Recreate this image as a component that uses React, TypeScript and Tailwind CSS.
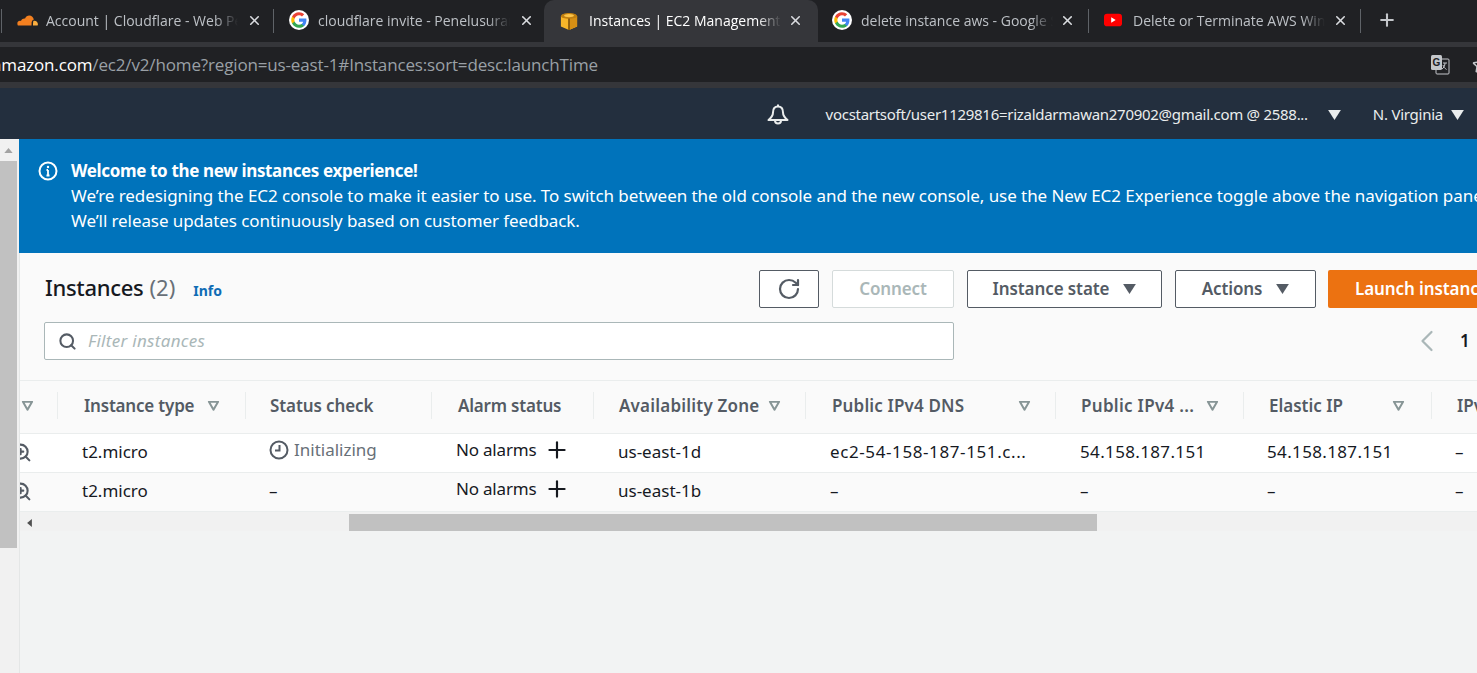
import { Plus, RotateCw, Search, Star, X, ChevronLeft, ZoomIn } from "lucide-react";

const ember = "font-['Noto_Sans','Open_Sans',sans-serif]";

function GoogleIcon() {
  return (
    <svg viewBox="0 0 24 24" className="h-[20px] w-[20px] shrink-0 rounded-full bg-white p-[1.5px]">
      <path fill="#4285F4" d="M22.5 12.2c0-.8-.1-1.5-.2-2.2H12v4.3h5.9c-.3 1.4-1 2.5-2.2 3.3v2.8h3.6c2.1-1.9 3.2-4.8 3.2-8.2z" />
      <path fill="#34A853" d="M12 23c3 0 5.500-1 7.300-2.700l-3.600-2.800c-1 .7-2.200 1.100-3.700 1.100-2.800 0-5.200-1.900-6.100-4.500H2.200V17c1.800 3.600 5.500 6 9.800 6z" />
      <path fill="#FBBC05" d="M5.900 14.100c-.2-.7-.4-1.400-.4-2.100s.1-1.400.4-2.100V7H2.200C1.400 8.500 1 10.200 1 12s.4 3.500 1.200 5l3.700-2.900z" />
      <path fill="#EA4335" d="M12 5.400c1.600 0 3.100.6 4.200 1.600l3.200-3.200C17.500 2.100 15 1 12 1 7.700 1 4 3.500 2.200 7l3.700 2.900c.9-2.600 3.300-4.500 6.100-4.500z" />
    </svg>
  );
}

function CloudIcon() {
  return (
    <svg viewBox="0 0 24 12" className="h-[11px] w-[21px] shrink-0">
      <path fill="#f38020" d="M16.600 11.600H1c-.4-.7-.6-1.500-.6-2.200 0-1.700 1.300-3 3-3 .4 0 .8.100 1.100.200C5.400 4.600 7 3.800 8.400 3.800c.4-.1.600-.1.800-.1C10 1.700 11.900.4 14 .4c2.700 0 4.900 2 5.200 4.700-1.400.2-2.200 1.400-2.500 3l-.1 3.500z" />
      <path fill="#faae40" d="M18.300 11.600h5.300c.2-.5.300-.9.300-1.400 0-2.200-1.800-4-4-4-.5 0-1 .1-1.200.3-.4 1.200-.4 3.500-.4 5.100z" />
    </svg>
  );
}

function AwsBoxIcon() {
  return (
    <svg viewBox="0 0 20 20" className="mt-[2px] h-[20px] w-[18px] shrink-0">
      <path fill="#f9b629" d="M1 4.500L10 7l9-2.500v11.500l-9 4-9-4z" />
      <path fill="#d68f14" d="M10 7l9-2.500v11.500l-9 4z" />
      <path fill="#c07f10" d="M1 4.500C1 2.500 5 1 10 1s9 1.500 9 3.500S15 7.500 10 7.500 1 6.500 1 4.500z" />
      <path fill="#fbc44a" d="M4.500 4c0-1 2.500-1.800 5.500-1.800s5.500.8 5.500 1.800-2.500 1.800-5.500 1.800S4.500 5 4.500 4z" />
      <path fill="#8a5a0c" d="M9 7.200h2V20H9z" />
    </svg>
  );
}

function YoutubeIcon() {
  return (
    <svg viewBox="0 0 20 14" className="h-[14px] w-[18px] shrink-0">
      <rect width="20" height="14" rx="3.500" fill="#ff0000" />
      <path d="M8 4l5 3-5 3z" fill="#fff" />
    </svg>
  );
}

const tabs = [
  { title: "Account | Cloudflare - Web Performance", icon: <CloudIcon />, box: "w-[271px] pl-[15px] pr-[11px]", sep: true, text: "text-[#bdc1c6]" },
  { title: "cloudflare invite - Penelusuran Google", icon: <GoogleIcon />, box: "w-[270px] pl-[15px] pr-[10px]", sep: false, text: "text-[#bdc1c6]" },
  { title: "Instances | EC2 Management Console", icon: <AwsBoxIcon />, box: "w-[274px] rounded-t-[10px] bg-[#35363a] pl-[16px] pr-[15px]", sep: false, text: "text-white" },
  { title: "delete instance aws - Google Search", icon: <GoogleIcon />, box: "w-[270px] pl-[14px] pr-[13px]", sep: true, text: "text-[#bdc1c6]" },
  { title: "Delete or Terminate AWS Windows", icon: <YoutubeIcon />, box: "w-[271px] pl-[15px] pr-[12px]", sep: true, text: "text-[#bdc1c6]" },
];

function TabSeparator() {
  return <div className="my-[9px] w-px shrink-0 bg-[#5f6368]" />;
}

function TabStrip() {
  return (
    <div className="flex h-[42px] items-stretch bg-[#202124] pl-[1px] font-['Open_Sans',sans-serif]">
      <TabSeparator />
      {tabs.map((tab) => (
        <div key={tab.title} className="flex shrink-0 items-stretch">
          <div className={`flex shrink-0 items-center pb-[2px] ${tab.box}`}>
            <div className="flex w-[29px] shrink-0 items-center">{tab.icon}</div>
            <span className={`w-[192px] overflow-hidden whitespace-nowrap text-[14px] [mask-image:linear-gradient(to_right,black_88%,transparent)] ${tab.text}`}>
              {tab.title}
            </span>
            <X className="ml-auto shrink-0 text-[#dadce0]" size={15} strokeWidth={2.5} />
          </div>
          {tab.sep && <TabSeparator />}
        </div>
      ))}
      <div className="ml-[16px] flex items-center pb-[2px]">
        <Plus className="text-[#c4c7cb]" size={20} strokeWidth={2.5} />
      </div>
    </div>
  );
}

function AddressBar() {
  return (
    <>
      <div className="h-[5px] bg-[#35363a]" />
      <div className="flex h-[35px] items-center overflow-hidden bg-[#202124] font-['Open_Sans',sans-serif] text-[17px] tracking-[-0.15px]">
        <span className="-ml-[8px] whitespace-nowrap text-white">amazon.com</span>
        <span className="whitespace-nowrap text-[#9aa0a6]">/ec2/v2/home?region=us-east-1#Instances:sort=desc:launchTime</span>
        <div className="ml-auto flex items-center">
          <svg viewBox="0 0 19 21" className="h-[21px] w-[19px] shrink-0">
            <rect x="5" y="5" width="13" height="15" rx="1" fill="#202124" stroke="#c4c7cb" />
            <path d="M12 9h4M14 9c0 3-1.500 5-3 6M12 11c.5 2 2 3.500 3.500 4.500" fill="none" stroke="#c4c7cb" />
            <rect x="0" y="1" width="11" height="15" rx="1.500" fill="#c4c7cb" />
            <text x="1.500" y="12" fontSize="10" fill="#202124" fontWeight="700" fontFamily="Liberation Sans">G</text>
          </svg>
          <Star className="-mr-[13px] ml-[22px] shrink-0 text-[#c4c7cb]" size={18} strokeWidth={2} />
        </div>
      </div>
      <div className="h-[6px] bg-[#35363a]" />
    </>
  );
}

function Caret({ className }: { className: string }) {
  return (
    <svg viewBox="0 0 14 11" className={className}>
      <path d="M0 0h14L7 11z" fill="currentColor" />
    </svg>
  );
}

function ConsoleNav() {
  return (
    <div className={`flex h-[51px] items-center justify-end bg-[#232f3e] pr-[13px] pt-[2px] text-[15px] text-[#eaeded] ${ember}`}>
      <svg viewBox="0 0 24 24" className="mr-[36px] h-[24px] w-[24px]" fill="none" stroke="#eaeded" strokeWidth="2">
        <path d="M12 3.500c-3.500 0-5 2.500-5 6 0 3-1.500 5-4.500 7.500h19c-3-2.500-4.500-4.500-4.500-7.500 0-3.500-1.500-6-5-6z" strokeLinejoin="round" />
        <path d="M12 1.500v2" />
        <path d="M9 17.500a3 3 0 0 0 6 0" />
      </svg>
      <span className="whitespace-nowrap tracking-[-0.28px]">vocstartsoft/user1129816=rizaldarmawan270902@gmail.com @ 2588...</span>
      <Caret className="ml-[20px] h-[10px] w-[13px] text-[#eaeded]" />
      <span className="ml-[32px] whitespace-nowrap tracking-[-0.25px]">N. Virginia</span>
      <Caret className="ml-[8px] h-[10px] w-[13px] text-[#eaeded]" />
    </div>
  );
}

function Banner() {
  return (
    <div className={`flex h-[114px] overflow-hidden bg-[#0073bb] pl-[19px] pt-[19px] text-[17px] leading-[25px] text-white ${ember}`}>
      <svg viewBox="0 0 20 20" className="mt-[3px] h-[20px] w-[20px] shrink-0" fill="none" stroke="#fff" strokeWidth="2">
        <circle cx="10" cy="10" r="8.500" />
        <path d="M10 9v5M8.500 14.500h3M8.500 9H10" strokeWidth="1.800" />
        <circle cx="10" cy="6" r="1.200" fill="#fff" stroke="none" />
      </svg>
      <div className="ml-[13px] whitespace-nowrap tracking-[-0.09px]">
        <div className="font-bold tracking-[-0.35px]">Welcome to the new instances experience!</div>
        <div className="tracking-[-0.06px]">We’re redesigning the EC2 console to make it easier to use. To switch between the old console and the new console, use the New EC2 Experience toggle above the navigation panel.</div>
        <div>We’ll release updates continuously based on customer feedback.</div>
      </div>
    </div>
  );
}

function OutlineButton({ label }: { label: string }) {
  return (
    <button className="flex h-[38px] w-full items-center justify-center gap-[14px] whitespace-nowrap rounded-[2px] border border-[#545b64] bg-white text-[17px] font-semibold tracking-[-0.1px] text-[#545b64]">
      {label}
      <Caret className="h-[10px] w-[13px] text-[#545b64]" />
    </button>
  );
}

function Toolbar() {
  return (
    <div className={`h-[127px] bg-[#fafafa] pl-[24px] pt-[17px] ${ember}`}>
      <div className="flex h-[38px] items-center">
        <div className="-mt-[4px] flex w-[715px] shrink-0 items-baseline pl-[1px]">
          <span className="text-[22px] font-medium tracking-[-0.3px] text-[#16191f]">Instances</span>
          <span className="ml-[6px] text-[22px] text-[#687078]">(2)</span>
          <span className="ml-[18px] text-[14px] font-bold text-[#0f6cb5]">Info</span>
        </div>
        <div className="flex items-center">
          <button className="flex h-[38px] w-[60px] items-center justify-center rounded-[2px] border border-[#545b64] bg-white">
            <RotateCw className="text-[#545b64]" size={24} strokeWidth={2.2} />
          </button>
          <button className="ml-[13px] h-[38px] w-[122px] rounded-[2px] border border-[#d5dbdb] bg-white text-[17px] font-semibold tracking-[-0.1px] text-[#aab7b8]">Connect</button>
          <div className="ml-[13px] w-[195px]"><OutlineButton label="Instance state" /></div>
          <div className="ml-[13px] w-[141px]"><OutlineButton label="Actions" /></div>
          <button className="ml-[12px] h-[38px] w-[190px] shrink-0 whitespace-nowrap rounded-[2px] bg-[#ec7211] pl-[27px] text-left text-[17px] font-semibold tracking-[-0.1px] text-white">Launch instances</button>
        </div>
      </div>
      <div className="mt-[14px] flex h-[38px] items-center">
        <div className="flex h-[38px] w-[910px] shrink-0 items-center rounded-[2px] border border-[#aab7b8] bg-white pl-[13px]">
          <Search className="text-[#545b64]" size={19} strokeWidth={2.6} />
          <span className="ml-[11px] text-[17px] italic tracking-[0.3px] text-[#aab7b8]">Filter instances</span>
        </div>
        <ChevronLeft className="ml-[455px] shrink-0 text-[#aab7b8]" size={36} strokeWidth={1.5} />
        <span className="ml-[15px] text-[17px] font-semibold text-[#16191f]">1</span>
      </div>
    </div>
  );
}

const columns = [
  { title: "Instance type", box: "w-[188px] pl-[26px] pr-[17px] tracking-[-0.2px]", filter: "ml-[13px]" },
  { title: "Status check", box: "w-[186px] pl-[24px] pr-[17px] tracking-[-0.1px]", filter: "" },
  { title: "Alarm status", box: "w-[162px] pl-[26px] pr-[17px] tracking-[-0.2px]", filter: "" },
  { title: "Availability Zone", box: "w-[212px] pl-[25px] pr-[17px] tracking-[0.2px]", filter: "ml-[9px]" },
  { title: "Public IPv4 DNS", box: "w-[250px] pl-[26px] pr-[24px] tracking-[0.15px]", filter: "ml-auto" },
  { title: "Public IPv4 ...", box: "w-[188px] pl-[25px] pr-[24px] tracking-[0.3px]", filter: "ml-auto" },
  { title: "Elastic IP", box: "w-[188px] pl-[25px] pr-[26px]", filter: "ml-auto" },
];

function FilterCaret() {
  return (
    <svg viewBox="0 0 14 12" className="h-[10px] w-[13px] shrink-0" fill="none" stroke="#879596" strokeWidth="2.4">
      <path d="M1.500 1h11L7 10.500z" strokeLinejoin="round" />
    </svg>
  );
}

function AlarmCell() {
  return (
    <div className="-mt-[5px] flex items-center tracking-[-0.2px]">
      <span>No alarms</span>
      <Plus className="ml-[8px] text-[#16191f]" size={26} strokeWidth={2} />
    </div>
  );
}

const rows = [
  {
    bg: "bg-white",
    status: (
      <div className="-mt-[5px] flex items-center gap-[5px] text-[#687078]">
        <svg viewBox="0 0 20 20" className="h-[20px] w-[20px]" fill="none" stroke="#545b64" strokeWidth="2">
          <circle cx="10" cy="10" r="8.500" />
          <path d="M10.500 5v5.500H6" />
        </svg>
        Initializing
      </div>
    ),
    zone: "us-east-1d",
    dns: "ec2-54-158-187-151.c...",
    ip: "54.158.187.151",
    elastic: "54.158.187.151",
  },
  {
    bg: "bg-[#fafafa]",
    status: <span>–</span>,
    zone: "us-east-1b",
    dns: "–",
    ip: "–",
    elastic: "–",
  },
];

function InstancesTable() {
  return (
    <div className={`overflow-hidden text-[17px] ${ember}`}>
      <div className="flex h-[54px] items-center border-y border-[#eaeded] bg-[#fafafa] pb-[3px] font-semibold text-[#545b64]">
        <div className="flex w-[37px] shrink-0 justify-end pr-[23px]"><FilterCaret /></div>
        {columns.map((col) => (
          <div key={col.title} className={`flex h-[27px] shrink-0 items-center border-l border-[#eaeded] ${col.box}`}>
            <span className="whitespace-nowrap">{col.title}</span>
            {col.filter && <span className={col.filter}><FilterCaret /></span>}
          </div>
        ))}
        <div className="flex h-[27px] w-[60px] shrink-0 items-center border-l border-[#eaeded] pl-[25px]">IPv6</div>
      </div>
      {rows.map((row) => (
        <div key={row.zone} className={`flex h-[39px] items-center border-b border-[#eaeded] pb-[2px] text-[#16191f] ${row.bg}`}>
          <div className="flex w-[37px] shrink-0 justify-end overflow-hidden pr-[25px]">
            <ZoomIn className="shrink-0 text-[#545b64]" size={21} strokeWidth={2.4} />
          </div>
          <div className="w-[188px] shrink-0 pl-[25px]">t2.micro</div>
          <div className="w-[186px] shrink-0 pl-[24px]">{row.status}</div>
          <div className="w-[162px] shrink-0 pl-[25px]"><AlarmCell /></div>
          <div className="w-[212px] shrink-0 pl-[25px]">{row.zone}</div>
          <div className="w-[250px] shrink-0 whitespace-nowrap pl-[25px] tracking-[0.6px]">{row.dns}</div>
          <div className="w-[188px] shrink-0 pl-[25px] tracking-[0.35px]">{row.ip}</div>
          <div className="w-[188px] shrink-0 pl-[24px] tracking-[0.35px]">{row.elastic}</div>
          <div className="shrink-0 pl-[24px]">–</div>
        </div>
      ))}
    </div>
  );
}

function HorizontalScrollbar() {
  return (
    <div className="flex h-[19px] items-end bg-[#f1f1f1]">
      <svg viewBox="0 0 6 10" className="mb-[4px] ml-[7px] h-[8px] w-[5px] shrink-0">
        <path d="M6 0v10L0 5z" fill="#505050" />
      </svg>
      <div className="ml-[317px] h-[17px] w-[748px] shrink-0 bg-[#c1c1c1]" />
    </div>
  );
}

function VerticalScrollbar() {
  return (
    <div className="h-[534px] w-[19px] shrink-0 bg-[#f1f1f1]">
      <div className="flex h-[22px] w-[17px] items-center justify-center">
        <svg viewBox="0 0 10 6" className="h-[5px] w-[9px]">
          <path d="M0 6h10L5 0z" fill="#a3a3a3" />
        </svg>
      </div>
      <div className="h-[387px] w-[17px] bg-[#c1c1c1]" />
    </div>
  );
}

export default function App() {
  return (
    <div className="h-[673px] w-[1477px] overflow-hidden bg-[#f2f3f3]">
      <TabStrip />
      <AddressBar />
      <ConsoleNav />
      <div className="flex">
        <VerticalScrollbar />
        <div className="w-[1458px] shrink-0">
          <Banner />
          <div className="h-[420px] border-l border-[#e4e6e6]">
            <Toolbar />
            <InstancesTable />
            <HorizontalScrollbar />
          </div>
        </div>
      </div>
    </div>
  );
}
